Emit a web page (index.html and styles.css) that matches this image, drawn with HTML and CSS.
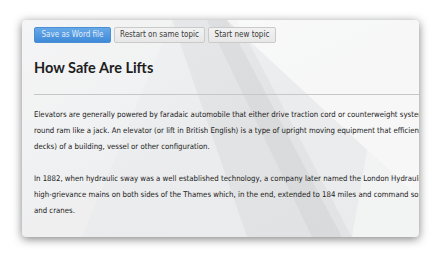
FILE: index.html
```html
<!DOCTYPE html>
<html>
<head>
<meta charset="utf-8">
<link rel="stylesheet" href="styles.css">
</head>
<body>
<div class="card">
  <div class="toolbar">
    <button class="btn btn-primary">Save as Word file</button>
    <button class="btn btn-restart">Restart on same topic</button>
    <button class="btn btn-new">Start new topic</button>
  </div>
  <h1 class="title">How Safe Are Lifts</h1>
  <hr class="rule">
  <p class="para">Elevators are generally powered by faradaic automobile that either drive traction cord or counterweight systems like a hoist, or pump hydraulic fluid to raise a cylindrical piston<br>round ram like a jack. An elevator (or lift in British English) is a type of upright moving equipment that efficiently moves people or goods between floors (levels,<br>decks) of a building, vessel or other configuration.</p>
  <p class="para">In 1882, when hydraulic sway was a well established technology, a company later named the London Hydraulic Power Company was formed by Edward B. Ellington. It constructed a network of<br>high-grievance mains on both sides of the Thames which, in the end, extended to 184 miles and command some 8,000 machines, predominantly elevators (lifts)<br>and cranes.</p>
</div>
</body>
</html>
```
FILE: styles.css
```css
html, body {
  margin: 0;
  padding: 0;
  background: #ffffff;
}
body {
  padding: 20px 21px 23px 22px;
  width: 440px;
  height: 260px;
  box-sizing: border-box;
  overflow: hidden;
}
.card {
  width: 397px;
  height: 217px;
  box-sizing: border-box;
  border-radius: 4px;
  overflow: hidden;
  padding: 7px 0 0 12px;
  box-shadow: 0 2px 10px rgba(0,0,0,0.5);
  background-color: #eceeef;
  background-size: 100% 100%;
  background-image: url("data:image/svg+xml,%3Csvg xmlns='http://www.w3.org/2000/svg' viewBox='0 0 397 217' preserveAspectRatio='none'%3E%3Cdefs%3E%3ClinearGradient id='g' x1='0' y1='0' x2='1' y2='1'%3E%3Cstop offset='0' stop-color='%23f2f3f4'/%3E%3Cstop offset='0.5' stop-color='%23ebeced'/%3E%3Cstop offset='1' stop-color='%23eaebec'/%3E%3C/linearGradient%3E%3C/defs%3E%3Crect width='397' height='217' fill='url(%23g)'/%3E%3Cpolygon points='150,0 205,0 320,217 225,217' fill='%23000' fill-opacity='0.035'/%3E%3Cpolygon points='185,0 215,0 330,217 290,217' fill='%23000' fill-opacity='0.03'/%3E%3Cpolygon points='205,0 397,0 397,178' fill='%23fff' fill-opacity='0.6'/%3E%3Cpolygon points='330,217 397,217 397,178 345,130' fill='%23fff' fill-opacity='0.4'/%3E%3Cpolygon points='0,0 150,0 60,217 0,217' fill='%23fff' fill-opacity='0.2'/%3E%3C/svg%3E");
}
.toolbar {
  display: flex;
  gap: 3px;
  height: 16px;
}
.btn {
  margin: 0;
  height: 16px;
  padding: 0;
  font-family: "DejaVu Sans Condensed", "DejaVu Sans", Tahoma, sans-serif;
  font-size: 8px;
  color: #3a3a3a;
  background: linear-gradient(#f2f2f2, #e7e7e7);
  border: 1px solid #cacaca;
  border-radius: 2px;
  line-height: 14px;
  text-align: center;
  white-space: nowrap;
}
.btn-primary {
  width: 77px;
  color: #e2edf9;
  background: linear-gradient(#66aae8, #3f89d8);
  border-color: #4a8fd6;
}
.btn-restart {
  width: 91px;
}
.btn-new {
  width: 68px;
}
.title {
  margin: 15px 0 0;
  font-family: Lato, sans-serif;
  font-weight: 700;
  font-size: 14.5px;
  line-height: 20px;
  color: #1e1e1e;
}
.rule {
  margin: 16px 0 0;
  border: 0;
  border-top: 1px solid #c6c7c8;
  height: 0;
}
.para {
  margin: 12px 0 0;
  font-family: "DejaVu Sans Condensed", "DejaVu Sans", Tahoma, sans-serif;
  font-size: 7.75px;
  line-height: 16px;
  color: #222;
  white-space: nowrap;
}
.para + .para {
  margin-top: 16px;
}
```
